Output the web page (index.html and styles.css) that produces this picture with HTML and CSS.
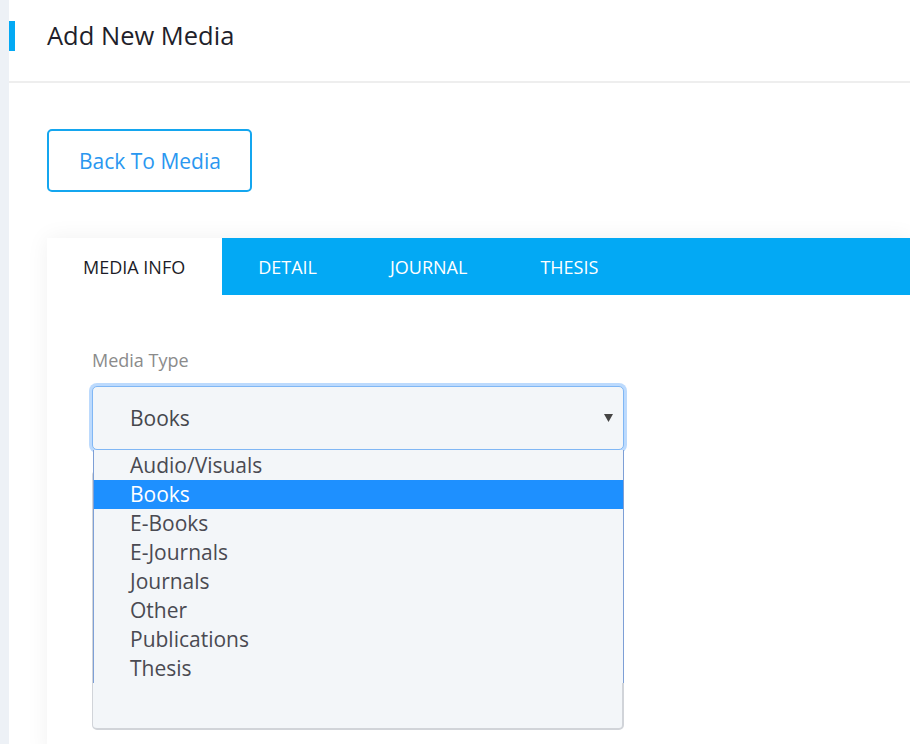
FILE: index.html
```html
<!DOCTYPE html>
<html>
<head>
<meta charset="utf-8">
<link rel="stylesheet" href="styles.css">
</head>
<body>
<div class="app">
  <div class="strip"></div>
  <div class="main">
    <header class="header">
      <span class="accent"></span>
      <h1 class="title">Add New Media</h1>
    </header>
    <div class="content">
      <button class="back-btn">Back To Media</button>
      <div class="card">
        <nav class="tabs">
          <span class="tab active">MEDIA INFO</span>
          <span class="tab">DETAIL</span>
          <span class="tab">JOURNAL</span>
          <span class="tab">THESIS</span>
        </nav>
        <div class="card-body">
          <label class="label">Media Type</label>
          <div class="select-wrap">
            <div class="select">
              <span class="select-value">Books</span>
              <svg class="caret" width="9" height="9" viewBox="0 0 9 9"><path d="M0 1h9L4.5 9z" fill="#454545"/></svg>
            </div>
            <ul class="dropdown">
              <li class="opt">Audio/Visuals</li>
              <li class="opt selected">Books</li>
              <li class="opt">E-Books</li>
              <li class="opt">E-Journals</li>
              <li class="opt">Journals</li>
              <li class="opt">Other</li>
              <li class="opt">Publications</li>
              <li class="opt">Thesis</li>
            </ul>
          </div>
          <div class="under-field"></div>
        </div>
      </div>
    </div>
  </div>
</div>
</body>
</html>
```

FILE: styles.css
```css
* { box-sizing: border-box; }
html, body { margin: 0; padding: 0; }
body {
  background: #fff;
  font-family: "Open Sans", "Noto Sans", sans-serif;
  overflow: hidden;
  width: 910px;
  height: 744px;
}
.app { display: flex; min-height: 744px; }
.strip { width: 9px; flex: 0 0 9px; background: #edf1f6; }
.main { flex: 1; min-width: 0; }
.header {
  display: flex;
  align-items: flex-start;
  height: 83px;
  border-bottom: 2px solid #eeeeee;
}
.accent {
  width: 6px;
  height: 30px;
  margin-top: 21px;
  background: #03a9f4;
}
.title {
  margin: 20px 0 0 32px;
  font-size: 25.5px;
  line-height: 30px;
  font-weight: 400;
  color: #1f1f2b;
}
.content { padding-left: 38px; }
.back-btn {
  display: block;
  margin-top: 46px;
  height: 63px;
  padding: 0 29px 0 30px;
  background: #fff;
  border: 2px solid #14a6ef;
  border-radius: 5px;
  font-family: inherit;
  font-size: 21px;
  color: #2a97f0;
}
.card {
  margin-top: 46px;
  background: #fff;
  box-shadow: 0 0 22px rgba(0,0,0,0.06);
  min-height: 520px;
}
.tabs {
  display: flex;
  height: 57px;
  background: #03a9f4;
}
.tab {
  display: flex;
  align-items: center;
  padding: 0 37px 0 36px;
  font-size: 18px;
  color: #fff;
}
.tab.active { background: #fff; color: #1c1c28; }
.card-body { padding: 53px 0 0 45px; }
.label {
  display: block;
  font-size: 18px;
  line-height: 24px;
  color: #8b8b8b;
  margin-bottom: 14px;
}
.select-wrap { position: relative; width: 532px; }
.select {
  display: flex;
  align-items: center;
  justify-content: space-between;
  height: 64px;
  padding: 0 10px 0 37px;
  background: #f3f6f9;
  border: 1px solid #80b7f5;
  border-radius: 5px;
  box-shadow: 0 0 0 3px #bcdafd;
}
.select-value { font-size: 21px; color: #45474d; }
.caret { margin-top: -2px; }
.dropdown {
  position: absolute;
  top: 100%;
  left: 1px;
  right: 0;
  margin: 0;
  padding: 1px 0 0;
  list-style: none;
  background: #f3f6f9;
  border: 1px solid #7d9fd6;
  border-top: none;
  border-bottom: none;
  z-index: 2;
}
.opt {
  height: 29px;
  line-height: 29px;
  padding-left: 36px;
  font-size: 21px;
  color: #4a4a52;
}
.opt.selected { background: #1e90ff; color: #fff; }
.under-field {
  margin-top: 20px;
  width: 532px;
  height: 260px;
  background: #f3f6f9;
  border: 2px solid #d1d4d9;
  border-top-width: 1px;
  border-left-width: 1px;
  border-radius: 5px;
}
```
